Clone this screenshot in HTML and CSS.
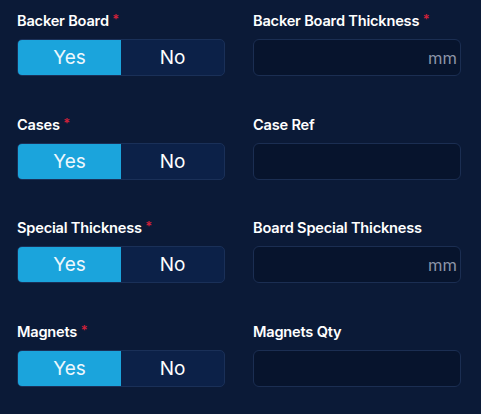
FILE: index.html
```html
<!DOCTYPE html>
<html lang="en">
<head>
    <meta charset="UTF-8">
    <meta name="viewport" content="width=device-width, initial-scale=1.0">
    <title>Board Options</title>
    <link rel="stylesheet" href="styles.css">
</head>
<body>
    <form class="options">
        <div class="field">
            <label class="label">Backer Board <span class="req">*</span></label>
            <div class="toggle">
                <button type="button" class="seg active">Yes</button>
                <button type="button" class="seg">No</button>
            </div>
        </div>
        <div class="field">
            <label class="label">Backer Board Thickness <span class="req">*</span></label>
            <div class="input">
                <input type="text">
                <span class="unit">mm</span>
            </div>
        </div>

        <div class="field">
            <label class="label">Cases <span class="req">*</span></label>
            <div class="toggle">
                <button type="button" class="seg active">Yes</button>
                <button type="button" class="seg">No</button>
            </div>
        </div>
        <div class="field">
            <label class="label">Case Ref</label>
            <div class="input">
                <input type="text">
            </div>
        </div>

        <div class="field">
            <label class="label">Special Thickness <span class="req">*</span></label>
            <div class="toggle">
                <button type="button" class="seg active">Yes</button>
                <button type="button" class="seg">No</button>
            </div>
        </div>
        <div class="field">
            <label class="label">Board Special Thickness</label>
            <div class="input">
                <input type="text">
                <span class="unit">mm</span>
            </div>
        </div>

        <div class="field">
            <label class="label">Magnets <span class="req">*</span></label>
            <div class="toggle">
                <button type="button" class="seg active">Yes</button>
                <button type="button" class="seg">No</button>
            </div>
        </div>
        <div class="field">
            <label class="label">Magnets Qty</label>
            <div class="input">
                <input type="text">
            </div>
        </div>
    </form>
</body>
</html>
```

FILE: styles.css
```css
body {
    margin: 0;
    height: 100vh;
    background-color: #0b1a37;
    font-family: Inter, "Noto Sans", sans-serif;
    color: #fff;
}
.options {
    display: grid;
    grid-template-columns: 208px 208px;
    column-gap: 28px;
    row-gap: 39.7px;
    padding: 12px 0 0 17px;
}
.field {
    display: flex;
    flex-direction: column;
}
.label {
    font-size: 14.6px;
    font-weight: 600;
    line-height: 18px;
    height: 18px;
    margin-bottom: 9px;
    letter-spacing: -0.2px;
}
.req {
    color: #d0213a;
    font-size: 13px;
    line-height: 0;
    vertical-align: 2px;
}
.toggle {
    display: flex;
    height: 37px;
    border: 1px solid #1a3058;
    border-radius: 5px;
    overflow: hidden;
    box-sizing: border-box;
    background: #0c2148;
}
.seg {
    flex: 1;
    border: none;
    background: transparent;
    color: #fff;
    font-family: inherit;
    font-size: 19px;
    padding: 0;
}
.seg.active {
    background: #1ba4dc;
    color: #eef8fd;
}
.input {
    display: flex;
    align-items: center;
    height: 37px;
    box-sizing: border-box;
    border: 1px solid #1b2e52;
    border-radius: 6px;
    background: #07142d;
    padding: 0 3px 0 10px;
}
.input input {
    flex: 1;
    min-width: 0;
    border: none;
    background: transparent;
    outline: none;
}
.unit {
    color: #8d96a8;
    font-size: 16.5px;
}
```
